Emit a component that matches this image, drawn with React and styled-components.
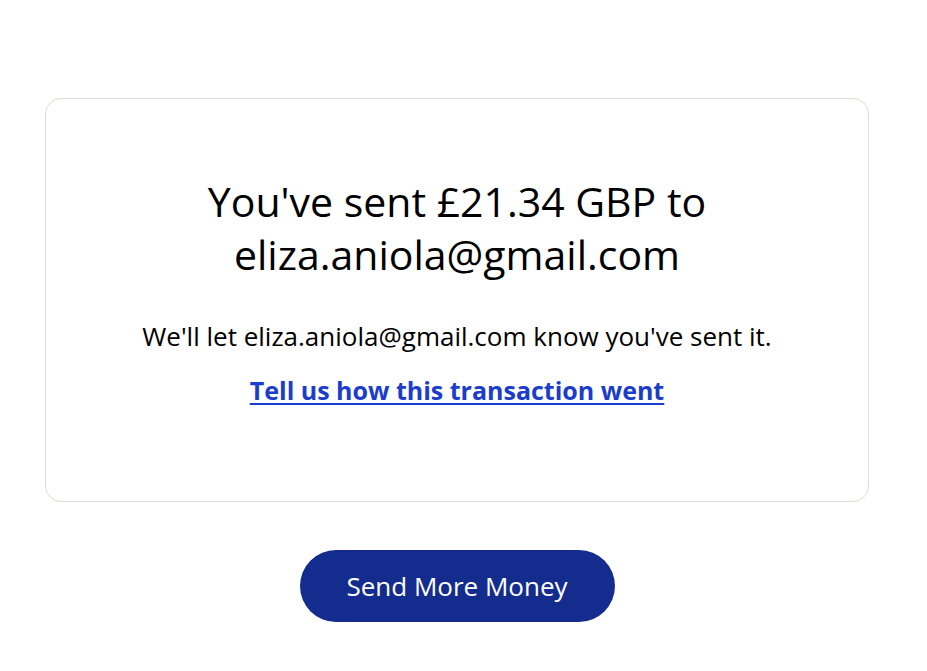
import React from 'react';
import styled, { createGlobalStyle } from 'styled-components';

const GlobalStyle = createGlobalStyle`
  body {
    margin: 0;
    background: #ffffff;
    font-family: 'Open Sans', 'Liberation Sans', sans-serif;
    color: #000000;
  }
`;

const Page = styled.div`
  width: 824px;
  padding: 98px 0 0 45px;
  display: flex;
  flex-direction: column;
  align-items: center;
  gap: 48px;
`;

const Card = styled.div`
  box-sizing: border-box;
  width: 824px;
  height: 404px;
  border: 1px solid #dedcd5;
  border-radius: 16px;
  display: flex;
  flex-direction: column;
  align-items: center;
  padding-top: 76px;
  text-align: center;
`;

const Heading = styled.h1`
  margin: 0;
  font-size: 41px;
  line-height: 53px;
  font-weight: 400;
  color: #000;
`;

const Message = styled.p`
  margin: 39px 0 0;
  font-size: 26px;
  line-height: 32px;
  color: #000;
`;

const FeedbackLink = styled.a`
  margin-top: 22px;
  font-size: 25px;
  line-height: 32px;
  font-weight: 700;
  color: #1a3dcc;
  text-decoration: underline;
  text-decoration-thickness: 2px;
  text-underline-offset: 3px;
  cursor: pointer;
`;

const PrimaryButton = styled.button`
  width: 315px;
  height: 72px;
  border: none;
  border-radius: 36px;
  background: #142c8e;
  color: #ffffff;
  font-family: 'Open Sans', 'Liberation Sans', sans-serif;
  font-size: 26px;
  cursor: pointer;
`;

const App = () => {
  const recipient = 'eliza.aniola@gmail.com';

  return (
    <>
      <GlobalStyle />
      <Page>
        <Card>
          <Heading>
            You've sent £21.34 GBP to
            <br />
            {recipient}
          </Heading>
          <Message>We'll let {recipient} know you've sent it.</Message>
          <FeedbackLink>Tell us how this transaction went</FeedbackLink>
        </Card>
        <PrimaryButton>Send More Money</PrimaryButton>
      </Page>
    </>
  );
};

export default App;
